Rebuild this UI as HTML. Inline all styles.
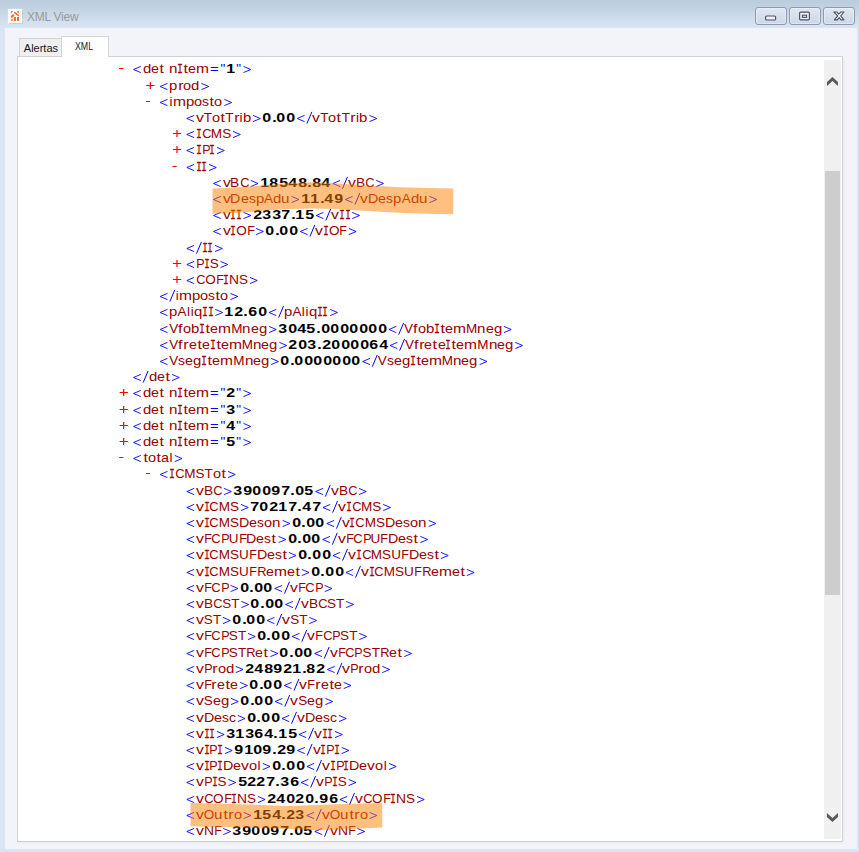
<!DOCTYPE html>
<html><head><meta charset="utf-8"><title>XML View</title>
<style>
html,body{margin:0;padding:0}
body{width:859px;height:852px;position:relative;overflow:hidden;background:#d9e5f2;font-family:"Liberation Sans",sans-serif}
#tb{position:absolute;left:0;top:0;width:859px;height:28px;background:linear-gradient(#bbccdc 0,#c2d2e1 8px,#d1dfec 20px,#d9e5f2 28px)}
#ico{position:absolute;left:8px;top:9px;width:14px;height:14px;background:#fff;box-shadow:0 0 1px rgba(255,255,255,.6),0.5px 0.5px 1px rgba(120,135,160,.25)}
#ttl{position:absolute;left:27px;top:9px;font-size:12px;line-height:16px;color:#9a9a9a;letter-spacing:-0.25px;white-space:nowrap}
.wb{position:absolute;top:7px;width:30px;height:16px;border:1px solid #8c9ab3;border-radius:3px;background:linear-gradient(#dfe7f2,#cdd8e7);box-shadow:inset 0 0 0 1px rgba(255,255,255,.35)}
#in{position:absolute;left:5px;top:28px;width:852px;height:821px;background:#f2f4f9}
#pn{position:absolute;left:17px;top:56px;width:824px;height:784px;background:#fff;border:1px solid #d1d1d1;box-shadow:1px 1px 0 #ececee,2px 2px 0 #f0f1f4}
.tab{position:absolute;box-sizing:border-box;border:1px solid #d4d4d4;border-bottom:none;font-size:11px;color:#15152a;white-space:nowrap}
#t1{left:19px;top:38px;width:43px;height:18px;background:#efefef}
#t2{left:61px;top:36px;width:48px;height:21px;background:#fff}
#t1 span{position:absolute;left:3.8px;top:2.5px;line-height:13px}
#t2 span{position:absolute;left:12.5px;top:3.2px;line-height:13px;transform:scaleX(0.8);transform-origin:0 0}
#sb{position:absolute;left:824px;top:60px;width:17px;height:779px;background:#f0f0f0}
#th{position:absolute;left:825px;top:171px;width:15px;height:424px;background:#cdcdcd}
.r{position:absolute;white-space:nowrap;font-size:13.5px;line-height:16px;height:16px}
.r i{display:inline-block;font-style:normal;text-align:center;vertical-align:baseline;overflow:visible}
#mk{position:absolute;left:0;top:0;width:859px;height:852px}
#hl{position:absolute;left:0;top:0;width:859px;height:852px;pointer-events:none}
.k0{width:8.307px;color:#990000;transform:scaleX(1.107);}
.k1{width:7.947px;color:#990000;transform:scaleX(1.059);}
.k2{width:5.253px;color:#990000;transform:scaleX(1.180);}
.k3{width:4.693px;color:#990000;}
.k4{width:8.440px;color:#990000;transform:scaleX(1.124);}
.k5{width:auto;margin:0 -1.243px;color:#990000;font-family:"Liberation Mono",monospace;font-size:13.5px;-webkit-text-stroke:0.3px #990000;transform:scaleX(0.68);}
.k6{width:12.973px;color:#990000;transform:scaleX(1.154);}
.k7{width:10.907px;color:#0000ff;transform:translateY(0px) scaleX(1.1);}
.k8{width:6.120px;color:#0000ff;transform:translateY(0px);}
.k9{width:9.480px;color:#000;font-weight:bold;font-size:13px;transform:scaleX(1.23);}
.k10{width:8.307px;color:#990000;transform:scaleX(1.107);}
.k11{width:5.693px;color:#990000;transform:scaleX(1.180);}
.k12{width:8.093px;color:#990000;transform:scaleX(1.078);}
.k13{width:3.653px;color:#990000;}
.k14{width:6.947px;color:#990000;transform:scaleX(1.029);}
.k15{width:7.893px;color:#990000;transform:scaleX(1.169);}
.k16{width:8.213px;color:#990000;}
.k17{width:8.307px;color:#990000;transform:scaleX(1.107);}
.k18{width:9.480px;color:#000;font-weight:bold;font-size:13px;transform:scaleX(1.23);}
.k19{width:4.813px;color:#000;font-weight:bold;font-size:13px;transform:scaleX(1.23);}
.k20{width:9.307px;color:#990000;transform:scaleX(0.955);}
.k21{width:11.240px;color:#990000;}
.k22{width:9.120px;color:#990000;}
.k23{width:8.040px;color:#990000;transform:scaleX(0.930);}
.k24{width:9.147px;color:#990000;transform:scaleX(1.016);}
.k25{width:9.480px;color:#000;font-weight:bold;font-size:13px;transform:scaleX(1.23);}
.k26{width:9.480px;color:#000;font-weight:bold;font-size:13px;transform:scaleX(1.23);}
.k27{width:9.480px;color:#000;font-weight:bold;font-size:13px;transform:scaleX(1.23);}
.k28{width:10.280px;color:#990000;transform:scaleX(1.055);}
.k29{width:9.120px;color:#990000;}
.k30{width:8.440px;color:#990000;transform:scaleX(1.124);}
.k31{width:9.480px;color:#000;font-weight:bold;font-size:13px;transform:scaleX(1.23);}
.k32{width:9.480px;color:#000;font-weight:bold;font-size:13px;transform:scaleX(1.23);}
.k33{width:9.480px;color:#000;font-weight:bold;font-size:13px;transform:scaleX(1.23);}
.k34{width:9.480px;color:#000;font-weight:bold;font-size:13px;transform:scaleX(1.23);}
.k35{width:10.493px;color:#990000;}
.k36{width:7.667px;color:#990000;transform:scaleX(0.930);}
.k37{width:9.973px;color:#990000;transform:scaleX(1.023);}
.k38{width:3.653px;color:#990000;}
.k39{width:8.307px;color:#990000;transform:scaleX(1.107);}
.k40{width:9.480px;color:#000;font-weight:bold;font-size:13px;transform:scaleX(1.23);}
.k41{width:9.120px;color:#990000;}
.k42{width:4.693px;color:#990000;transform:scaleX(1.180);}
.k43{width:8.307px;color:#990000;transform:scaleX(1.107);}
.k44{width:8.013px;color:#990000;transform:scaleX(1.068);}
.k45{width:9.760px;color:#990000;}
.k46{width:9.267px;color:#990000;transform:scaleX(0.951);}
.k47{width:6.947px;color:#990000;transform:scaleX(1.029);}
</style></head>
<body>
<div id="tb"></div>
<div id="ico"><svg width="14" height="14" viewBox="0 0 14 14"><g fill="#ff6c1c" stroke="none">
<path d="M2.8 1.9h2.1q-.2 1.7-2.1 2.6z" opacity=".85"/><path d="M8.8 1.9h2.3v2.9q-1.8-.9-2.3-2.9z" opacity=".85"/>
<path d="M2.9 12v-1.7l1.8-.5V12z" opacity=".85"/><path d="M5.8 12V8.3q1.1-1.3 2.2 0V12z"/><path d="M9 12V8.3q1.05-1.3 2.1 0V12z"/></g>
<g stroke="#ff6c1c" fill="none" stroke-linecap="round"><path d="M6.8 3.6L10.4 6.5" stroke-width="1.6"/><path d="M3.8 7.7L5.3 6.2" stroke-width="2"/></g></svg></div>
<div id="ttl">XML View</div>
<div class="wb" style="left:755px"><svg width="30" height="16" viewBox="0 0 30 16"><rect x="9.6" y="8" width="10" height="4" rx="1" fill="#eef0f4" stroke="#4e5564" stroke-width="1.2"/></svg></div>
<div class="wb" style="left:789px"><svg width="30" height="16" viewBox="0 0 30 16"><rect x="9.6" y="4.2" width="9.8" height="7.6" rx="1" fill="#eef0f4" stroke="#4e5564" stroke-width="1.2"/><rect x="12.4" y="7.2" width="4.2" height="2.2" fill="#dfe6f0" stroke="#4e5564" stroke-width="1.1"/></svg></div>
<div class="wb" style="left:823px"><svg width="30" height="16" viewBox="0 0 30 16"><path d="M9.9 4h3l1.8 2.2L17 4h3l-3.3 3.9 3.3 4h-3l-1.8-2.3-1.8 2.3h-3l3.3-4z" fill="#f4f5f8" stroke="#4e5564" stroke-width="1.1" stroke-linejoin="round"/></svg></div>
<div id="in"></div>
<div id="pn"></div>
<div class="tab" id="t1"><span>Alertas</span></div>
<div class="tab" id="t2"><span>XML</span></div>
<div id="sb"></div><div id="th"></div>
<svg style="position:absolute;left:0;top:0" width="859" height="852" viewBox="0 0 859 852"><g fill="#595959"><path d="M827 82.1L832.45 77L837.95 82.1V86L832.45 81L827 86Z"/><path d="M826.9 813L832.45 818L838 813V816.9L832.45 822L826.9 816.9Z"/></g></svg>
<div class="r" style="left:131.70px;top:61px"><i style="width:10.91px"></i><i class="k0">d</i><i class="k1">e</i><i class="k2">t</i><i class="k3">&nbsp;</i><i class="k4">n</i><i class="k5">I</i><i class="k2">t</i><i class="k1">e</i><i class="k6">m</i><i class="k7">=</i><i class="k8">&quot;</i><i class="k9">1</i><i class="k8">&quot;</i></div>
<div class="r" style="left:158.37px;top:78px"><i style="width:10.91px"></i><i class="k10">p</i><i class="k11">r</i><i class="k12">o</i><i class="k0">d</i></div>
<div class="r" style="left:158.37px;top:94px"><i style="width:10.91px"></i><i class="k13">i</i><i class="k6">m</i><i class="k10">p</i><i class="k12">o</i><i class="k14">s</i><i class="k2">t</i><i class="k12">o</i></div>
<div class="r" style="left:185.03px;top:110px"><i style="width:10.91px"></i><i class="k15">v</i><i class="k16">T</i><i class="k12">o</i><i class="k2">t</i><i class="k16">T</i><i class="k11">r</i><i class="k13">i</i><i class="k17">b</i><i style="width:10.91px"></i><i class="k18">0</i><i class="k19">.</i><i class="k18">0</i><i class="k18">0</i><i style="width:16.96px"></i><i class="k15">v</i><i class="k16">T</i><i class="k12">o</i><i class="k2">t</i><i class="k16">T</i><i class="k11">r</i><i class="k13">i</i><i class="k17">b</i></div>
<div class="r" style="left:185.03px;top:126px"><i style="width:10.91px"></i><i class="k5">I</i><i class="k20">C</i><i class="k21">M</i><i class="k22">S</i></div>
<div class="r" style="left:185.03px;top:142px"><i style="width:10.91px"></i><i class="k5">I</i><i class="k23">P</i><i class="k5">I</i></div>
<div class="r" style="left:185.03px;top:159px"><i style="width:10.91px"></i><i class="k5">I</i><i class="k5">I</i></div>
<div class="r" style="left:211.70px;top:175px"><i style="width:10.91px"></i><i class="k15">v</i><i class="k24">B</i><i class="k20">C</i><i style="width:10.91px"></i><i class="k9">1</i><i class="k25">8</i><i class="k26">5</i><i class="k27">4</i><i class="k25">8</i><i class="k19">.</i><i class="k25">8</i><i class="k27">4</i><i style="width:16.96px"></i><i class="k15">v</i><i class="k24">B</i><i class="k20">C</i></div>
<div class="r" style="left:211.70px;top:191px"><i style="width:10.91px"></i><i class="k15">v</i><i class="k28">D</i><i class="k1">e</i><i class="k14">s</i><i class="k10">p</i><i class="k29">A</i><i class="k0">d</i><i class="k30">u</i><i style="width:10.91px"></i><i class="k9">1</i><i class="k9">1</i><i class="k19">.</i><i class="k27">4</i><i class="k31">9</i><i style="width:16.96px"></i><i class="k15">v</i><i class="k28">D</i><i class="k1">e</i><i class="k14">s</i><i class="k10">p</i><i class="k29">A</i><i class="k0">d</i><i class="k30">u</i></div>
<div class="r" style="left:211.70px;top:207px"><i style="width:10.91px"></i><i class="k15">v</i><i class="k5">I</i><i class="k5">I</i><i style="width:10.91px"></i><i class="k32">2</i><i class="k33">3</i><i class="k33">3</i><i class="k34">7</i><i class="k19">.</i><i class="k9">1</i><i class="k26">5</i><i style="width:16.96px"></i><i class="k15">v</i><i class="k5">I</i><i class="k5">I</i></div>
<div class="r" style="left:211.70px;top:223px"><i style="width:10.91px"></i><i class="k15">v</i><i class="k5">I</i><i class="k35">O</i><i class="k36">F</i><i style="width:10.91px"></i><i class="k18">0</i><i class="k19">.</i><i class="k18">0</i><i class="k18">0</i><i style="width:16.96px"></i><i class="k15">v</i><i class="k5">I</i><i class="k35">O</i><i class="k36">F</i></div>
<div class="r" style="left:185.03px;top:240px"><i style="width:16.96px"></i><i class="k5">I</i><i class="k5">I</i></div>
<div class="r" style="left:185.03px;top:256px"><i style="width:10.91px"></i><i class="k23">P</i><i class="k5">I</i><i class="k22">S</i></div>
<div class="r" style="left:185.03px;top:272px"><i style="width:10.91px"></i><i class="k20">C</i><i class="k35">O</i><i class="k36">F</i><i class="k5">I</i><i class="k37">N</i><i class="k22">S</i></div>
<div class="r" style="left:158.37px;top:288px"><i style="width:16.96px"></i><i class="k13">i</i><i class="k6">m</i><i class="k10">p</i><i class="k12">o</i><i class="k14">s</i><i class="k2">t</i><i class="k12">o</i></div>
<div class="r" style="left:158.37px;top:304px"><i style="width:10.91px"></i><i class="k10">p</i><i class="k29">A</i><i class="k38">l</i><i class="k13">i</i><i class="k39">q</i><i class="k5">I</i><i class="k5">I</i><i style="width:10.91px"></i><i class="k9">1</i><i class="k32">2</i><i class="k19">.</i><i class="k40">6</i><i class="k18">0</i><i style="width:16.96px"></i><i class="k10">p</i><i class="k29">A</i><i class="k38">l</i><i class="k13">i</i><i class="k39">q</i><i class="k5">I</i><i class="k5">I</i></div>
<div class="r" style="left:158.37px;top:321px"><i style="width:10.91px"></i><i class="k41">V</i><i class="k42">f</i><i class="k12">o</i><i class="k17">b</i><i class="k5">I</i><i class="k2">t</i><i class="k1">e</i><i class="k6">m</i><i class="k21">M</i><i class="k4">n</i><i class="k1">e</i><i class="k43">g</i><i style="width:10.91px"></i><i class="k33">3</i><i class="k18">0</i><i class="k27">4</i><i class="k26">5</i><i class="k19">.</i><i class="k18">0</i><i class="k18">0</i><i class="k18">0</i><i class="k18">0</i><i class="k18">0</i><i class="k18">0</i><i class="k18">0</i><i style="width:16.96px"></i><i class="k41">V</i><i class="k42">f</i><i class="k12">o</i><i class="k17">b</i><i class="k5">I</i><i class="k2">t</i><i class="k1">e</i><i class="k6">m</i><i class="k21">M</i><i class="k4">n</i><i class="k1">e</i><i class="k43">g</i></div>
<div class="r" style="left:158.37px;top:337px"><i style="width:10.91px"></i><i class="k41">V</i><i class="k42">f</i><i class="k11">r</i><i class="k1">e</i><i class="k2">t</i><i class="k1">e</i><i class="k5">I</i><i class="k2">t</i><i class="k1">e</i><i class="k6">m</i><i class="k21">M</i><i class="k4">n</i><i class="k1">e</i><i class="k43">g</i><i style="width:10.91px"></i><i class="k32">2</i><i class="k18">0</i><i class="k33">3</i><i class="k19">.</i><i class="k32">2</i><i class="k18">0</i><i class="k18">0</i><i class="k18">0</i><i class="k18">0</i><i class="k40">6</i><i class="k27">4</i><i style="width:16.96px"></i><i class="k41">V</i><i class="k42">f</i><i class="k11">r</i><i class="k1">e</i><i class="k2">t</i><i class="k1">e</i><i class="k5">I</i><i class="k2">t</i><i class="k1">e</i><i class="k6">m</i><i class="k21">M</i><i class="k4">n</i><i class="k1">e</i><i class="k43">g</i></div>
<div class="r" style="left:158.37px;top:353px"><i style="width:10.91px"></i><i class="k41">V</i><i class="k14">s</i><i class="k1">e</i><i class="k43">g</i><i class="k5">I</i><i class="k2">t</i><i class="k1">e</i><i class="k6">m</i><i class="k21">M</i><i class="k4">n</i><i class="k1">e</i><i class="k43">g</i><i style="width:10.91px"></i><i class="k18">0</i><i class="k19">.</i><i class="k18">0</i><i class="k18">0</i><i class="k18">0</i><i class="k18">0</i><i class="k18">0</i><i class="k18">0</i><i class="k18">0</i><i style="width:16.96px"></i><i class="k41">V</i><i class="k14">s</i><i class="k1">e</i><i class="k43">g</i><i class="k5">I</i><i class="k2">t</i><i class="k1">e</i><i class="k6">m</i><i class="k21">M</i><i class="k4">n</i><i class="k1">e</i><i class="k43">g</i></div>
<div class="r" style="left:131.70px;top:369px"><i style="width:16.96px"></i><i class="k0">d</i><i class="k1">e</i><i class="k2">t</i></div>
<div class="r" style="left:131.70px;top:385px"><i style="width:10.91px"></i><i class="k0">d</i><i class="k1">e</i><i class="k2">t</i><i class="k3">&nbsp;</i><i class="k4">n</i><i class="k5">I</i><i class="k2">t</i><i class="k1">e</i><i class="k6">m</i><i class="k7">=</i><i class="k8">&quot;</i><i class="k32">2</i><i class="k8">&quot;</i></div>
<div class="r" style="left:131.70px;top:402px"><i style="width:10.91px"></i><i class="k0">d</i><i class="k1">e</i><i class="k2">t</i><i class="k3">&nbsp;</i><i class="k4">n</i><i class="k5">I</i><i class="k2">t</i><i class="k1">e</i><i class="k6">m</i><i class="k7">=</i><i class="k8">&quot;</i><i class="k33">3</i><i class="k8">&quot;</i></div>
<div class="r" style="left:131.70px;top:418px"><i style="width:10.91px"></i><i class="k0">d</i><i class="k1">e</i><i class="k2">t</i><i class="k3">&nbsp;</i><i class="k4">n</i><i class="k5">I</i><i class="k2">t</i><i class="k1">e</i><i class="k6">m</i><i class="k7">=</i><i class="k8">&quot;</i><i class="k27">4</i><i class="k8">&quot;</i></div>
<div class="r" style="left:131.70px;top:434px"><i style="width:10.91px"></i><i class="k0">d</i><i class="k1">e</i><i class="k2">t</i><i class="k3">&nbsp;</i><i class="k4">n</i><i class="k5">I</i><i class="k2">t</i><i class="k1">e</i><i class="k6">m</i><i class="k7">=</i><i class="k8">&quot;</i><i class="k26">5</i><i class="k8">&quot;</i></div>
<div class="r" style="left:131.70px;top:450px"><i style="width:10.91px"></i><i class="k2">t</i><i class="k12">o</i><i class="k2">t</i><i class="k44">a</i><i class="k38">l</i></div>
<div class="r" style="left:158.37px;top:466px"><i style="width:10.91px"></i><i class="k5">I</i><i class="k20">C</i><i class="k21">M</i><i class="k22">S</i><i class="k16">T</i><i class="k12">o</i><i class="k2">t</i></div>
<div class="r" style="left:185.03px;top:483px"><i style="width:10.91px"></i><i class="k15">v</i><i class="k24">B</i><i class="k20">C</i><i style="width:10.91px"></i><i class="k33">3</i><i class="k31">9</i><i class="k18">0</i><i class="k18">0</i><i class="k31">9</i><i class="k34">7</i><i class="k19">.</i><i class="k18">0</i><i class="k26">5</i><i style="width:16.96px"></i><i class="k15">v</i><i class="k24">B</i><i class="k20">C</i></div>
<div class="r" style="left:185.03px;top:499px"><i style="width:10.91px"></i><i class="k15">v</i><i class="k5">I</i><i class="k20">C</i><i class="k21">M</i><i class="k22">S</i><i style="width:10.91px"></i><i class="k34">7</i><i class="k18">0</i><i class="k32">2</i><i class="k9">1</i><i class="k34">7</i><i class="k19">.</i><i class="k27">4</i><i class="k34">7</i><i style="width:16.96px"></i><i class="k15">v</i><i class="k5">I</i><i class="k20">C</i><i class="k21">M</i><i class="k22">S</i></div>
<div class="r" style="left:185.03px;top:515px"><i style="width:10.91px"></i><i class="k15">v</i><i class="k5">I</i><i class="k20">C</i><i class="k21">M</i><i class="k22">S</i><i class="k28">D</i><i class="k1">e</i><i class="k14">s</i><i class="k12">o</i><i class="k4">n</i><i style="width:10.91px"></i><i class="k18">0</i><i class="k19">.</i><i class="k18">0</i><i class="k18">0</i><i style="width:16.96px"></i><i class="k15">v</i><i class="k5">I</i><i class="k20">C</i><i class="k21">M</i><i class="k22">S</i><i class="k28">D</i><i class="k1">e</i><i class="k14">s</i><i class="k12">o</i><i class="k4">n</i></div>
<div class="r" style="left:185.03px;top:531px"><i style="width:10.91px"></i><i class="k15">v</i><i class="k36">F</i><i class="k20">C</i><i class="k23">P</i><i class="k45">U</i><i class="k36">F</i><i class="k28">D</i><i class="k1">e</i><i class="k14">s</i><i class="k2">t</i><i style="width:10.91px"></i><i class="k18">0</i><i class="k19">.</i><i class="k18">0</i><i class="k18">0</i><i style="width:16.96px"></i><i class="k15">v</i><i class="k36">F</i><i class="k20">C</i><i class="k23">P</i><i class="k45">U</i><i class="k36">F</i><i class="k28">D</i><i class="k1">e</i><i class="k14">s</i><i class="k2">t</i></div>
<div class="r" style="left:185.03px;top:547px"><i style="width:10.91px"></i><i class="k15">v</i><i class="k5">I</i><i class="k20">C</i><i class="k21">M</i><i class="k22">S</i><i class="k45">U</i><i class="k36">F</i><i class="k28">D</i><i class="k1">e</i><i class="k14">s</i><i class="k2">t</i><i style="width:10.91px"></i><i class="k18">0</i><i class="k19">.</i><i class="k18">0</i><i class="k18">0</i><i style="width:16.96px"></i><i class="k15">v</i><i class="k5">I</i><i class="k20">C</i><i class="k21">M</i><i class="k22">S</i><i class="k45">U</i><i class="k36">F</i><i class="k28">D</i><i class="k1">e</i><i class="k14">s</i><i class="k2">t</i></div>
<div class="r" style="left:185.03px;top:564px"><i style="width:10.91px"></i><i class="k15">v</i><i class="k5">I</i><i class="k20">C</i><i class="k21">M</i><i class="k22">S</i><i class="k45">U</i><i class="k36">F</i><i class="k46">R</i><i class="k1">e</i><i class="k6">m</i><i class="k1">e</i><i class="k2">t</i><i style="width:10.91px"></i><i class="k18">0</i><i class="k19">.</i><i class="k18">0</i><i class="k18">0</i><i style="width:16.96px"></i><i class="k15">v</i><i class="k5">I</i><i class="k20">C</i><i class="k21">M</i><i class="k22">S</i><i class="k45">U</i><i class="k36">F</i><i class="k46">R</i><i class="k1">e</i><i class="k6">m</i><i class="k1">e</i><i class="k2">t</i></div>
<div class="r" style="left:185.03px;top:580px"><i style="width:10.91px"></i><i class="k15">v</i><i class="k36">F</i><i class="k20">C</i><i class="k23">P</i><i style="width:10.91px"></i><i class="k18">0</i><i class="k19">.</i><i class="k18">0</i><i class="k18">0</i><i style="width:16.96px"></i><i class="k15">v</i><i class="k36">F</i><i class="k20">C</i><i class="k23">P</i></div>
<div class="r" style="left:185.03px;top:596px"><i style="width:10.91px"></i><i class="k15">v</i><i class="k24">B</i><i class="k20">C</i><i class="k22">S</i><i class="k16">T</i><i style="width:10.91px"></i><i class="k18">0</i><i class="k19">.</i><i class="k18">0</i><i class="k18">0</i><i style="width:16.96px"></i><i class="k15">v</i><i class="k24">B</i><i class="k20">C</i><i class="k22">S</i><i class="k16">T</i></div>
<div class="r" style="left:185.03px;top:612px"><i style="width:10.91px"></i><i class="k15">v</i><i class="k22">S</i><i class="k16">T</i><i style="width:10.91px"></i><i class="k18">0</i><i class="k19">.</i><i class="k18">0</i><i class="k18">0</i><i style="width:16.96px"></i><i class="k15">v</i><i class="k22">S</i><i class="k16">T</i></div>
<div class="r" style="left:185.03px;top:628px"><i style="width:10.91px"></i><i class="k15">v</i><i class="k36">F</i><i class="k20">C</i><i class="k23">P</i><i class="k22">S</i><i class="k16">T</i><i style="width:10.91px"></i><i class="k18">0</i><i class="k19">.</i><i class="k18">0</i><i class="k18">0</i><i style="width:16.96px"></i><i class="k15">v</i><i class="k36">F</i><i class="k20">C</i><i class="k23">P</i><i class="k22">S</i><i class="k16">T</i></div>
<div class="r" style="left:185.03px;top:645px"><i style="width:10.91px"></i><i class="k15">v</i><i class="k36">F</i><i class="k20">C</i><i class="k23">P</i><i class="k22">S</i><i class="k16">T</i><i class="k46">R</i><i class="k1">e</i><i class="k2">t</i><i style="width:10.91px"></i><i class="k18">0</i><i class="k19">.</i><i class="k18">0</i><i class="k18">0</i><i style="width:16.96px"></i><i class="k15">v</i><i class="k36">F</i><i class="k20">C</i><i class="k23">P</i><i class="k22">S</i><i class="k16">T</i><i class="k46">R</i><i class="k1">e</i><i class="k2">t</i></div>
<div class="r" style="left:185.03px;top:661px"><i style="width:10.91px"></i><i class="k15">v</i><i class="k23">P</i><i class="k11">r</i><i class="k12">o</i><i class="k0">d</i><i style="width:10.91px"></i><i class="k32">2</i><i class="k27">4</i><i class="k25">8</i><i class="k31">9</i><i class="k32">2</i><i class="k9">1</i><i class="k19">.</i><i class="k25">8</i><i class="k32">2</i><i style="width:16.96px"></i><i class="k15">v</i><i class="k23">P</i><i class="k11">r</i><i class="k12">o</i><i class="k0">d</i></div>
<div class="r" style="left:185.03px;top:677px"><i style="width:10.91px"></i><i class="k15">v</i><i class="k36">F</i><i class="k11">r</i><i class="k1">e</i><i class="k2">t</i><i class="k1">e</i><i style="width:10.91px"></i><i class="k18">0</i><i class="k19">.</i><i class="k18">0</i><i class="k18">0</i><i style="width:16.96px"></i><i class="k15">v</i><i class="k36">F</i><i class="k11">r</i><i class="k1">e</i><i class="k2">t</i><i class="k1">e</i></div>
<div class="r" style="left:185.03px;top:693px"><i style="width:10.91px"></i><i class="k15">v</i><i class="k22">S</i><i class="k1">e</i><i class="k43">g</i><i style="width:10.91px"></i><i class="k18">0</i><i class="k19">.</i><i class="k18">0</i><i class="k18">0</i><i style="width:16.96px"></i><i class="k15">v</i><i class="k22">S</i><i class="k1">e</i><i class="k43">g</i></div>
<div class="r" style="left:185.03px;top:710px"><i style="width:10.91px"></i><i class="k15">v</i><i class="k28">D</i><i class="k1">e</i><i class="k14">s</i><i class="k47">c</i><i style="width:10.91px"></i><i class="k18">0</i><i class="k19">.</i><i class="k18">0</i><i class="k18">0</i><i style="width:16.96px"></i><i class="k15">v</i><i class="k28">D</i><i class="k1">e</i><i class="k14">s</i><i class="k47">c</i></div>
<div class="r" style="left:185.03px;top:726px"><i style="width:10.91px"></i><i class="k15">v</i><i class="k5">I</i><i class="k5">I</i><i style="width:10.91px"></i><i class="k33">3</i><i class="k9">1</i><i class="k33">3</i><i class="k40">6</i><i class="k27">4</i><i class="k19">.</i><i class="k9">1</i><i class="k26">5</i><i style="width:16.96px"></i><i class="k15">v</i><i class="k5">I</i><i class="k5">I</i></div>
<div class="r" style="left:185.03px;top:742px"><i style="width:10.91px"></i><i class="k15">v</i><i class="k5">I</i><i class="k23">P</i><i class="k5">I</i><i style="width:10.91px"></i><i class="k31">9</i><i class="k9">1</i><i class="k18">0</i><i class="k31">9</i><i class="k19">.</i><i class="k32">2</i><i class="k31">9</i><i style="width:16.96px"></i><i class="k15">v</i><i class="k5">I</i><i class="k23">P</i><i class="k5">I</i></div>
<div class="r" style="left:185.03px;top:758px"><i style="width:10.91px"></i><i class="k15">v</i><i class="k5">I</i><i class="k23">P</i><i class="k5">I</i><i class="k28">D</i><i class="k1">e</i><i class="k15">v</i><i class="k12">o</i><i class="k38">l</i><i style="width:10.91px"></i><i class="k18">0</i><i class="k19">.</i><i class="k18">0</i><i class="k18">0</i><i style="width:16.96px"></i><i class="k15">v</i><i class="k5">I</i><i class="k23">P</i><i class="k5">I</i><i class="k28">D</i><i class="k1">e</i><i class="k15">v</i><i class="k12">o</i><i class="k38">l</i></div>
<div class="r" style="left:185.03px;top:774px"><i style="width:10.91px"></i><i class="k15">v</i><i class="k23">P</i><i class="k5">I</i><i class="k22">S</i><i style="width:10.91px"></i><i class="k26">5</i><i class="k32">2</i><i class="k32">2</i><i class="k34">7</i><i class="k19">.</i><i class="k33">3</i><i class="k40">6</i><i style="width:16.96px"></i><i class="k15">v</i><i class="k23">P</i><i class="k5">I</i><i class="k22">S</i></div>
<div class="r" style="left:185.03px;top:791px"><i style="width:10.91px"></i><i class="k15">v</i><i class="k20">C</i><i class="k35">O</i><i class="k36">F</i><i class="k5">I</i><i class="k37">N</i><i class="k22">S</i><i style="width:10.91px"></i><i class="k32">2</i><i class="k27">4</i><i class="k18">0</i><i class="k32">2</i><i class="k18">0</i><i class="k19">.</i><i class="k31">9</i><i class="k40">6</i><i style="width:16.96px"></i><i class="k15">v</i><i class="k20">C</i><i class="k35">O</i><i class="k36">F</i><i class="k5">I</i><i class="k37">N</i><i class="k22">S</i></div>
<div class="r" style="left:185.03px;top:807px"><i style="width:10.91px"></i><i class="k15">v</i><i class="k35">O</i><i class="k30">u</i><i class="k2">t</i><i class="k11">r</i><i class="k12">o</i><i style="width:10.91px"></i><i class="k9">1</i><i class="k26">5</i><i class="k27">4</i><i class="k19">.</i><i class="k32">2</i><i class="k33">3</i><i style="width:16.96px"></i><i class="k15">v</i><i class="k35">O</i><i class="k30">u</i><i class="k2">t</i><i class="k11">r</i><i class="k12">o</i></div>
<div class="r" style="left:185.03px;top:823px"><i style="width:10.91px"></i><i class="k15">v</i><i class="k37">N</i><i class="k36">F</i><i style="width:10.91px"></i><i class="k33">3</i><i class="k31">9</i><i class="k18">0</i><i class="k18">0</i><i class="k31">9</i><i class="k34">7</i><i class="k19">.</i><i class="k18">0</i><i class="k26">5</i><i style="width:16.96px"></i><i class="k15">v</i><i class="k37">N</i><i class="k36">F</i></div>
<svg id="mk" viewBox="0 0 859 852"><path d="M140.8 66.4L133.5 69.5L140.8 72.6M167.47 83.4L160.17 86.5L167.47 89.6M167.47 99.4L160.17 102.5L167.47 105.6M194.13 115.4L186.83 118.5L194.13 121.6M304.52 115.4L297.22 118.5L304.52 121.6M194.13 131.4L186.83 134.5L194.13 137.6M194.13 147.4L186.83 150.5L194.13 153.6M194.13 164.4L186.83 167.5L194.13 170.6M220.8 180.4L213.5 183.5L220.8 186.6M340.13 180.4L332.83 183.5L340.13 186.6M220.8 196.4L213.5 199.5L220.8 202.6M352.59 196.4L345.29 199.5L352.59 202.6M220.8 212.4L213.5 215.5L220.8 218.6M323.43 212.4L316.13 215.5L323.43 218.6M220.8 228.4L213.5 231.5L220.8 234.6M307.53 228.4L300.23 231.5L307.53 234.6M194.13 245.4L186.83 248.5L194.13 251.6M194.13 261.4L186.83 264.5L194.13 267.6M194.13 277.4L186.83 280.5L194.13 283.6M167.47 293.4L160.17 296.5L167.47 299.6M167.47 309.4L160.17 312.5L167.47 315.6M276.28 309.4L268.98 312.5L276.28 315.6M167.47 326.4L160.17 329.5L167.47 332.6M396.31 326.4L389.01 329.5L396.31 332.6M167.47 342.4L160.17 345.5L167.47 348.6M397.27 342.4L389.97 345.5L397.27 348.6M167.47 358.4L160.17 361.5L167.47 364.6M369.97 358.4L362.67 361.5L369.97 364.6M140.8 374.4L133.5 377.5L140.8 380.6M140.8 390.4L133.5 393.5L140.8 396.6M140.8 407.4L133.5 410.5L140.8 413.6M140.8 423.4L133.5 426.5L140.8 429.6M140.8 439.4L133.5 442.5L140.8 445.6M140.8 455.4L133.5 458.5L140.8 461.6M167.47 471.4L160.17 474.5L167.47 477.6M194.13 488.4L186.83 491.5L194.13 494.6M322.95 488.4L315.65 491.5L322.95 494.6M194.13 504.4L186.83 507.5L194.13 510.6M330.29 504.4L322.99 507.5L330.29 510.6M194.13 520.4L186.83 523.5L194.13 526.6M334.08 520.4L326.78 523.5L334.08 526.6M194.13 536.4L186.83 539.5L194.13 542.6M329.96 536.4L322.66 539.5L329.96 542.6M194.13 552.4L186.83 555.5L194.13 558.6M340.23 552.4L332.93 555.5L340.23 558.6M194.13 569.4L186.83 572.5L194.13 575.6M353.19 569.4L345.89 572.5L353.19 575.6M194.13 585.4L186.83 588.5L194.13 591.6M282.11 585.4L274.81 588.5L282.11 591.6M194.13 601.4L186.83 604.5L194.13 607.6M292.88 601.4L285.58 604.5L292.88 607.6M194.13 617.4L186.83 620.5L194.13 623.6M274.43 617.4L267.13 620.5L274.43 623.6M194.13 633.4L186.83 636.5L194.13 639.6M299.44 633.4L292.14 636.5L299.44 639.6M194.13 650.4L186.83 653.5L194.13 656.6M321.91 650.4L314.61 653.5L321.91 656.6M194.13 666.4L186.83 669.5L194.13 672.6M334.63 666.4L327.33 669.5L334.63 672.6M194.13 682.4L186.83 685.5L194.13 688.6M291.6 682.4L284.3 685.5L291.6 688.6M194.13 698.4L186.83 701.5L194.13 704.6M282.47 698.4L275.17 701.5L282.47 704.6M194.13 715.4L186.83 718.5L194.13 721.6M289.21 715.4L281.91 718.5L289.21 721.6M194.13 731.4L186.83 734.5L194.13 737.6M306.24 731.4L298.94 734.5L306.24 737.6M194.13 747.4L186.83 750.5L194.13 753.6M304.8 747.4L297.5 750.5L304.8 753.6M194.13 763.4L186.83 766.5L194.13 769.6M314.23 763.4L306.93 766.5L314.23 769.6M194.13 779.4L186.83 782.5L194.13 785.6M308.31 779.4L301.01 782.5L308.31 785.6M194.13 796.4L186.83 799.5L194.13 802.6M347.19 796.4L339.89 799.5L347.19 802.6M194.13 812.4L186.83 815.5L194.13 818.6M314.03 812.4L306.73 815.5L314.03 818.6M194.13 828.4L186.83 831.5L194.13 834.6M322.13 828.4L314.83 831.5L322.13 834.6M243.47 66.4L250.77 69.5L243.47 72.6M201.48 83.4L208.78 86.5L201.48 89.6M224.4 99.4L231.7 102.5L224.4 105.6M253.07 115.4L260.37 118.5L253.07 121.6M369.51 115.4L376.81 118.5L369.51 121.6M233.03 131.4L240.33 134.5L233.03 137.6M217.01 147.4L224.31 150.5L217.01 153.6M208.97 164.4L216.27 167.5L208.97 170.6M250.76 180.4L258.06 183.5L250.76 186.6M376.15 180.4L383.45 183.5L376.15 186.6M291.65 196.4L298.95 199.5L291.65 202.6M429.49 196.4L436.79 199.5L429.49 202.6M243.53 212.4L250.83 215.5L243.53 218.6M352.21 212.4L359.51 215.5L352.21 218.6M256.08 228.4L263.38 231.5L256.08 234.6M348.87 228.4L356.17 231.5L348.87 234.6M215.03 245.4L222.33 248.5L215.03 251.6M220.52 261.4L227.82 264.5L220.52 267.6M249.92 277.4L257.22 280.5L249.92 283.6M230.45 293.4L237.75 296.5L230.45 299.6M215.35 309.4L222.65 312.5L215.35 315.6M330.21 309.4L337.51 312.5L330.21 315.6M269.01 326.4L276.31 329.5L269.01 332.6M503.91 326.4L511.21 329.5L503.91 332.6M279.45 342.4L286.75 345.5L279.45 348.6M515.31 342.4L522.61 345.5L515.31 348.6M271.12 358.4L278.42 361.5L271.12 364.6M479.68 358.4L486.98 361.5L479.68 364.6M171.97 374.4L179.27 377.5L171.97 380.6M243.47 390.4L250.77 393.5L243.47 396.6M243.47 407.4L250.77 410.5L243.47 413.6M243.47 423.4L250.77 426.5L243.47 429.6M243.47 439.4L250.77 442.5L243.47 445.6M174.68 455.4L181.98 458.5L174.68 461.6M227.92 471.4L235.22 474.5L227.92 477.6M224.09 488.4L231.39 491.5L224.09 494.6M358.96 488.4L366.26 491.5L358.96 494.6M240.92 504.4L248.22 507.5L240.92 510.6M383.13 504.4L390.43 507.5L383.13 510.6M282.63 520.4L289.93 523.5L282.63 526.6M428.63 520.4L435.93 523.5L428.63 526.6M278.51 536.4L285.81 539.5L278.51 542.6M420.39 536.4L427.69 539.5L420.39 542.6M288.77 552.4L296.07 555.5L288.77 558.6M440.92 552.4L448.22 555.5L440.92 558.6M301.73 569.4L309.03 572.5L301.73 575.6M466.84 569.4L474.14 572.5L466.84 575.6M230.65 585.4L237.95 588.5L230.65 591.6M324.68 585.4L331.98 588.5L324.68 591.6M241.43 601.4L248.73 604.5L241.43 607.6M346.23 601.4L353.53 604.5L346.23 607.6M222.97 617.4L230.27 620.5L222.97 623.6M309.32 617.4L316.62 620.5L309.32 623.6M247.99 633.4L255.29 636.5L247.99 639.6M359.35 633.4L366.65 636.5L359.35 639.6M270.45 650.4L277.75 653.5L270.45 656.6M404.28 650.4L411.58 653.5L404.28 656.6M235.77 666.4L243.07 669.5L235.77 672.6M382.32 666.4L389.62 669.5L382.32 672.6M240.15 682.4L247.45 685.5L240.15 688.6M343.67 682.4L350.97 685.5L343.67 688.6M231.01 698.4L238.31 701.5L231.01 704.6M325.4 698.4L332.7 701.5L325.4 704.6M237.76 715.4L245.06 718.5L237.76 721.6M338.89 715.4L346.19 718.5L338.89 721.6M216.87 731.4L224.17 734.5L216.87 737.6M335.03 731.4L342.33 734.5L335.03 737.6M224.91 747.4L232.21 750.5L224.91 753.6M341.63 747.4L348.93 750.5L341.63 753.6M262.77 763.4L270.07 766.5L262.77 769.6M388.92 763.4L396.22 766.5L388.92 769.6M228.41 779.4L235.71 782.5L228.41 785.6M348.64 779.4L355.94 782.5L348.64 785.6M257.81 796.4L265.11 799.5L257.81 802.6M416.92 796.4L424.22 799.5L416.92 802.6M243.61 812.4L250.91 815.5L243.61 818.6M369.56 812.4L376.86 815.5L369.56 818.6M223.28 828.4L230.58 831.5L223.28 834.6M357.33 828.4L364.63 831.5L357.33 834.6" fill="none" stroke="#0000ff" stroke-width="0.9" stroke-linejoin="round"/><path d="M306.88 123.6L311.83 111.9M342.49 188.6L347.44 176.9M354.94 204.6L359.89 192.9M325.78 220.6L330.73 208.9M309.89 236.6L314.84 224.9M196.49 253.6L201.44 241.9M169.82 301.6L174.77 289.9M278.64 317.6L283.59 305.9M398.66 334.6L403.61 322.9M399.62 350.6L404.57 338.9M372.33 366.6L377.28 354.9M143.16 382.6L148.11 370.9M325.3 496.6L330.25 484.9M332.65 512.6L337.6 500.9M336.44 528.6L341.39 516.9M332.32 544.6L337.27 532.9M342.58 560.6L347.53 548.9M355.54 577.6L360.49 565.9M284.46 593.6L289.41 581.9M295.24 609.6L300.19 597.9M276.78 625.6L281.73 613.9M301.8 641.6L306.75 629.9M324.26 658.6L329.21 646.9M336.98 674.6L341.93 662.9M293.96 690.6L298.91 678.9M284.82 706.6L289.77 694.9M291.57 723.6L296.52 711.9M308.6 739.6L313.55 727.9M307.16 755.6L312.11 743.9M316.58 771.6L321.53 759.9M310.66 787.6L315.61 775.9M349.54 804.6L354.49 792.9M316.38 820.6L321.33 808.9M324.49 836.6L329.44 824.9" fill="none" stroke="#0000ff" stroke-width="1.0"/><path d="M119.2 68h4.2v1h-4.2zM145.87 101h4.2v1h-4.2zM172.53 166h4.2v1h-4.2zM119.2 457h4.2v1h-4.2zM145.87 473h4.2v1h-4.2zM146.27 85h8.3v1h-8.3zM149.72 82h1.2v7h-1.2zM172.93 133h8.3v1h-8.3zM176.38 130h1.2v7h-1.2zM172.93 149h8.3v1h-8.3zM176.38 146h1.2v7h-1.2zM172.93 263h8.3v1h-8.3zM176.38 260h1.2v7h-1.2zM172.93 279h8.3v1h-8.3zM176.38 276h1.2v7h-1.2zM119.6 392h8.3v1h-8.3zM123.05 389h1.2v7h-1.2zM119.6 409h8.3v1h-8.3zM123.05 406h1.2v7h-1.2zM119.6 425h8.3v1h-8.3zM123.05 422h1.2v7h-1.2zM119.6 441h8.3v1h-8.3zM123.05 438h1.2v7h-1.2z" fill="#ff0000"/></svg>
<svg id="hl" viewBox="0 0 859 852"><g fill="rgba(255,128,0,0.5)">
<path d="M212.5 188.6 Q250 187 290 183 Q320 181.3 345 184 Q400 188 453.3 188.6 L453.3 214.2 Q400 213.5 360 210.5 Q320 207 280 209.5 Q245 212.5 212.5 213.8 Z"/>
<path d="M190.5 803 Q240 804 290 806 Q335 804 382.2 803 L382.2 827.4 Q350 829 320 830.5 Q290 828.6 250 827.8 Q220 826.8 190.5 826.2 Z"/>
</g></svg>
</body></html>
